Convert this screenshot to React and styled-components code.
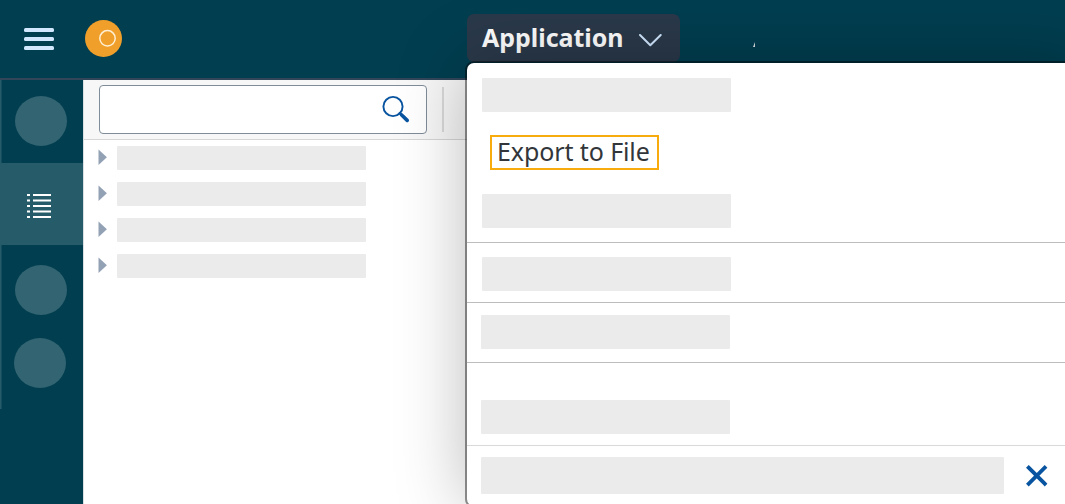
import React from 'react';
import styled, { createGlobalStyle } from 'styled-components';

const GlobalStyle = createGlobalStyle`
  * { box-sizing: border-box; }
  body { margin: 0; overflow: hidden; background: #fff; }
`;

const Page = styled.div`
  position: relative;
  display: flex;
  flex-direction: column;
  width: 1065px;
  height: 504px;
  overflow: hidden;
  font-family: "Noto Sans", "Open Sans", sans-serif;
`;

const Header = styled.header`
  display: flex;
  align-items: flex-start;
  height: 80px;
  flex: none;
  background: #003e50;
  border-bottom: 2px solid #32465a;
`;

const MenuButton = styled.button`
  display: flex;
  flex-direction: column;
  gap: 5px;
  margin: 28px 0 0 24px;
  padding: 0;
  border: 0;
  background: none;
`;

const MenuLine = styled.span`
  width: 30px;
  height: 4px;
  border-radius: 1.5px;
  background: #d1e8ff;
`;

const Logo = styled.svg`
  margin: 20px 0 0 31px;
`;

const Tab = styled.button`
  display: flex;
  align-items: flex-start;
  width: 213px;
  height: 48px;
  margin: 14px 0 0 345px;
  padding: 0 0 0 15px;
  border: 0;
  border-radius: 7px;
  background: #2a394a;
  color: #fff;
  font: bold 25px/46px "Noto Sans", sans-serif;
`;

const TabLabel = styled.span`
  width: 156px;
  text-align: left;
  white-space: nowrap;
  letter-spacing: -0.03px;
`;

const Chevron = styled.svg`
  margin-top: 18px;
`;

const HeaderMark = styled.svg`
  margin: 42px 0 0 73px;
`;

const Body = styled.div`
  display: flex;
  flex: 1;
`;

const Sidebar = styled.nav`
  display: flex;
  flex-direction: column;
  width: 83px;
  background: linear-gradient(#265b6a, #265b6a) left top / 1.5px 329px no-repeat #003e50;
`;

const SideItem = styled.div`
  display: flex;
  align-items: center;
  justify-content: center;
  height: ${(p) => p.$height}px;
  padding: ${(p) => p.$padding || '0'};
  background: ${(p) => (p.$active ? '#265b6a' : 'transparent')};
`;

const SideCircle = styled.span`
  width: 52px;
  height: 50px;
  border-radius: 50%;
  background: #336472;
`;

const Panel = styled.main`
  flex: 1;
  border-left: 1px solid #d9e0e3;
`;

const Toolbar = styled.div`
  display: flex;
  height: 60px;
  padding: 5px 0 0 15px;
  background: #f7f7f7;
  border-bottom: 1px solid #d5d6d7;
`;

const SearchField = styled.div`
  display: flex;
  justify-content: flex-end;
  width: 328px;
  height: 49px;
  padding: 9px 16px 0 0;
  border: 1px solid #7f8c99;
  border-radius: 4px;
  background: #fff;
`;

const Separator = styled.span`
  width: 2px;
  height: 45px;
  margin: 2px 0 0 15px;
  background: #d9d9d9;
`;

const Tree = styled.div`
  display: flex;
  flex-direction: column;
  gap: 12px;
  padding: 6px 0 0 14px;
`;

const TreeRow = styled.div`
  display: flex;
  align-items: flex-start;
  height: 24px;
`;

const Arrow = styled.svg`
  margin: 3px 10px 0 0;
`;

const Placeholder = styled.div`
  flex: none;
  width: ${(p) => p.$width || 249}px;
  height: ${(p) => p.$height || 34}px;
  border-radius: 1px;
  background: #ebebeb;
`;

const Popover = styled.div`
  position: absolute;
  left: 467px;
  top: 63px;
  width: 620px;
  height: 443px;
  border-radius: 7px;
  background: #fff;
  box-shadow: 0 0 0 2px rgba(0, 0, 0, 0.42), 0 0 70px rgba(0, 0, 0, 0.28);
`;

const Section = styled.section`
  display: flex;
  flex-direction: column;
  align-items: flex-start;
  height: ${(p) => p.$height}px;
  padding: ${(p) => p.$padding};
  border-bottom: 1px solid ${(p) => p.$line || '#bdbdbd'};
`;

const ExportItem = styled.button`
  width: 169px;
  height: 35px;
  margin: 23px 0 24px 8px;
  padding: 0 0 3px 5px;
  border: 2px solid #f8ab0c;
  background: #fff;
  color: #32363a;
  font: 25px/28px "Noto Sans", sans-serif;
  letter-spacing: -0.1px;
  text-align: left;
  white-space: nowrap;
`;

const Footer = styled.footer`
  display: flex;
  padding: 11px 0 0 14px;
`;

const CloseIcon = styled.svg`
  margin: 8px 0 0 22px;
`;

const LIST_LINES = [1, 6.5, 12, 17.5, 23];

export default function App() {
  return (
    <Page>
      <GlobalStyle />
      <Header>
        <MenuButton aria-label="Menu">
          <MenuLine />
          <MenuLine />
          <MenuLine />
        </MenuButton>
        <Logo width="37" height="37" viewBox="0 0 37 37">
          <circle cx="18.5" cy="18.5" r="18.5" fill="#f09f2b" />
          <circle cx="22.5" cy="18.3" r="7.7" fill="none" stroke="#ffefd2" strokeWidth="1.5" />
        </Logo>
        <Tab>
          <TabLabel>Application</TabLabel>
          <Chevron width="24" height="16" viewBox="0 0 24 16" fill="none" stroke="#d1e8ff" strokeWidth="2" strokeLinecap="round" strokeLinejoin="round">
            <path d="M2 3 12.3 13.3 22.7 3" />
          </Chevron>
        </Tab>
        <HeaderMark width="3" height="5" viewBox="0 0 3 5">
          <path d="M0 5 2 0V5Z" fill="#d7dfe3" />
        </HeaderMark>
      </Header>
      <Body>
        <Sidebar>
          <SideItem $height={83} $padding="0 1px 1px 0"><SideCircle /></SideItem>
          <SideItem $height={82} $active $padding="3px 5px 0 0">
            <svg width="24" height="24" viewBox="0 0 24 24" stroke="#fff" strokeWidth="1.8">
              {LIST_LINES.map((y) => (
                <path key={y} d={`M0 ${y}H3M6 ${y}H24`} />
              ))}
            </svg>
          </SideItem>
          <SideItem $height={90} $padding="0 1px 0 0"><SideCircle /></SideItem>
          <SideItem $height={56} $padding="0 3px 0 0"><SideCircle /></SideItem>
        </Sidebar>
        <Panel>
          <Toolbar>
            <SearchField>
              <svg width="29" height="29" viewBox="0 0 29 29" fill="none" stroke="#0854a0" strokeLinecap="round">
                <circle cx="12" cy="11.5" r="9.6" strokeWidth="1.9" />
                <path d="M18.8 18.2 20.8 20.2" strokeWidth="2.4" />
                <path d="M20.4 19.8 26.2 25.4" strokeWidth="3.6" />
              </svg>
            </SearchField>
            <Separator />
          </Toolbar>
          <Tree>
            {[0, 1, 2, 3].map((row) => (
              <TreeRow key={row}>
                <Arrow width="9" height="16" viewBox="0 0 9 16">
                  <path d="M.5 .5 8.9 8.3 .5 16Z" fill="#93a1b5" />
                </Arrow>
                <Placeholder $height={24} />
              </TreeRow>
            ))}
          </Tree>
        </Panel>
      </Body>
      <Popover>
        <Section $height={180} $padding="15px 0 0 15px">
          <Placeholder />
          <ExportItem>Export to File</ExportItem>
          <Placeholder />
        </Section>
        <Section $height={60} $padding="14px 0 0 15px"><Placeholder /></Section>
        <Section $height={60} $padding="12px 0 0 14px"><Placeholder /></Section>
        <Section $height={83} $padding="37px 0 0 14px" $line="#d9d9d9"><Placeholder /></Section>
        <Footer>
          <Placeholder $width={523} $height={37} />
          <CloseIcon width="22" height="22" viewBox="0 0 22 22" stroke="#0854a0" strokeWidth="3.8" strokeLinecap="square">
            <path d="M2.7 2.7 18.7 18.7M18.7 2.7 2.7 18.7" />
          </CloseIcon>
        </Footer>
      </Popover>
    </Page>
  );
}
